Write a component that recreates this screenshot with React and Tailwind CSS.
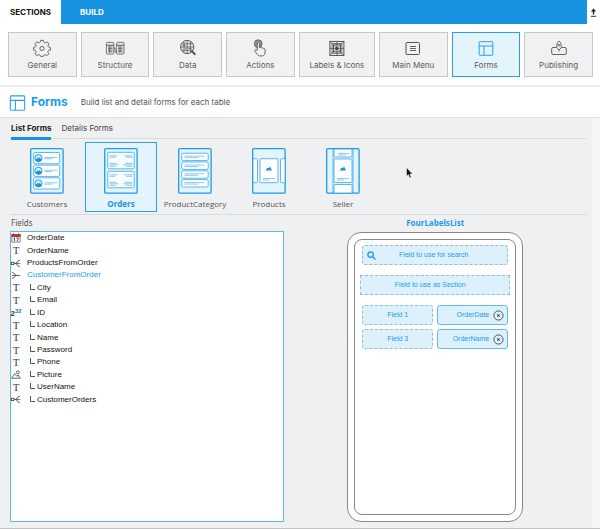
import React from 'react';

function GearIcon() {
  return (
    <svg width="18" height="18" viewBox="0 0 24 24" fill="none" stroke="currentColor" strokeWidth="1.2" strokeLinejoin="round">
      <path d="M10.300 1.800h3.400q.3 2.700 1.700 3.200t3.400-1.200l2.400 2.400q-1.700 2-1.200 3.400t3.200 1.700v3.400q-2.700.3-3.200 1.700t1.200 3.400l-2.400 2.400q-2-1.700-3.400-1.200t-1.700 2.200h-3.400q-.3-1.700-1.700-2.200t-3.400 1.200l-2.400-2.400q1.700-2 1.200-3.400t-3.200-1.700v-3.400q2.700-.3 3.200-1.700t-1.200-3.400l2.400-2.400q2 1.700 3.400 1.200t1.700-3.200z" />
      <circle cx="12" cy="12.600" r="2.800" />
    </svg>
  );
}

function StructureIcon() {
  return (
    <svg width="20" height="18" viewBox="0 0 20 18" fill="none" stroke="currentColor" strokeWidth="0.8">
      <rect x="1.400" y="3.400" width="7.400" height="11.600" rx="1" />
      <rect x="11.600" y="3.400" width="7.400" height="11.600" rx="1" />
      <path d="M1.400 6.200h7.400M11.600 6.200h7.400" strokeWidth="1" />
      <path d="M8.800 9h1.200v4h1.600M3 8h4.500M3 9.600h4.500M3 11.200h4.500M3 12.800h4.500M4.600 7.500v6M13 8h4.600M13 9.600h4.600M13 11.200h4.600M13 12.800h4.600M15 7.500v6" />
    </svg>
  );
}

function DataIcon() {
  return (
    <svg width="18" height="18" viewBox="0 0 18 18" fill="none" stroke="currentColor" strokeWidth="0.8">
      <circle cx="8.200" cy="8" r="6.600" strokeWidth="1" />
      <path d="M2.600 4.800h11.200M1.700 8h13M2.600 11.200h11.200M5 2.400v11.200M8.200 1.500v13M11.400 2.400v11.200M3.600 6.400h3M9.500 9.600h3M6 9.600h1.500" />
      <path d="M13 12.500l2.800 2.600" strokeWidth="2" strokeLinecap="round" />
    </svg>
  );
}

function TapIcon() {
  return (
    <svg width="18" height="18" viewBox="0 0 18 18" fill="none" stroke="currentColor" strokeWidth="0.9" strokeLinejoin="round">
      <circle cx="7.200" cy="4.700" r="3.900" fill="currentColor" fillOpacity="0.6" strokeWidth="0.8" />
      <path
        d="M6.300 11.300V4.800c0-1.400 2.200-1.400 2.200 0v3.900c.5-.7 1.700-.6 1.900.3.500-.6 1.700-.4 1.800.5.700-.4 1.900 0 1.900 1v2.500c0 2-1.100 3.900-2.500 3.900H8.500c-1 0-1.500-.5-2-1.300l-2.600-3.300c-.8-1.200.7-2.200 1.600-1.300z"
        fill="#f0f1f3"
      />
    </svg>
  );
}

function LabelsIcon() {
  return (
    <svg width="18" height="18" viewBox="0 0 18 18" fill="none" stroke="currentColor" strokeWidth="0.9">
      <rect x="1.900" y="2.400" width="14" height="14" />
      <rect x="5.400" y="5.900" width="7" height="7" />
      <path d="M1.900 2.400l14 14M15.900 2.400l-14 14M8.900 2.400v14M1.900 9.400h14M4 4.500h9.800v9.800H4z" strokeWidth="0.7" />
      <circle cx="8.900" cy="9.400" r="1.300" fill="currentColor" />
    </svg>
  );
}

function MenuIcon() {
  return (
    <svg width="18" height="18" viewBox="0 0 18 18" fill="none" stroke="currentColor">
      <rect x="2" y="3.500" width="13.500" height="12" rx="1" strokeWidth="1" />
      <path d="M6 7.500h6M6 9.500h6M6 11.500h6" strokeWidth="0.9" />
    </svg>
  );
}

function FormsIcon({ size }) {
  return (
    <svg width={size} height={size} viewBox="0 0 18 18" fill="none" stroke="currentColor" strokeWidth="1">
      <rect x="2.200" y="2.700" width="13.600" height="13.600" rx="0.800" />
      <path d="M2.200 7h13.600M7 7v9.300" />
    </svg>
  );
}

function PublishIcon() {
  return (
    <svg width="18" height="18" viewBox="0 0 18 18" fill="none" stroke="currentColor" strokeWidth="0.9" strokeLinejoin="round">
      <path d="M6.500 8.500H3a1.300 1.300 0 0 0-1.300 1.300v4.400A1.300 1.300 0 0 0 3 15.500h12a1.300 1.300 0 0 0 1.300-1.300V9.800A1.300 1.300 0 0 0 15 8.500h-3.500" />
      <path d="M9 2c-1.400 1-2.200 2.600-2.200 4.200v2.600L9 11l2.200-2.200V6.200C11.200 4.600 10.400 3 9 2zM9 11v1.500" />
      <circle cx="9" cy="6.200" r="0.800" />
    </svg>
  );
}

const tools = [
  { name: 'General', icon: <GearIcon /> },
  { name: 'Structure', icon: <StructureIcon /> },
  { name: 'Data', icon: <DataIcon /> },
  { name: 'Actions', icon: <TapIcon /> },
  { name: 'Labels & Icons', icon: <LabelsIcon />, dark: true },
  { name: 'Main Menu', icon: <MenuIcon /> },
  { name: 'Forms', icon: <FormsIcon size={18} />, active: true },
  { name: 'Publishing', icon: <PublishIcon /> },
];

function Thumb({ children }) {
  return (
    <svg width="34" height="46" viewBox="0 0 34 46" fill="none" stroke="#1f9be6" strokeWidth="0.7">
      <rect x="0.700" y="0.700" width="32.400" height="44.400" rx="1.200" fill="#e3f4fd" strokeWidth="1.300" />
      {children}
    </svg>
  );
}

function CustomersThumb() {
  return (
    <Thumb>
      {[4.5, 17.2, 29.8].map((y) => (
        <g key={y}>
          <rect x="3.700" y={y} width="26" height="11.200" rx="1.500" fill="#fff" />
          <circle cx="8.500" cy={y + 5.6} r="3.600" fill="#d5effd" strokeWidth="1" />
          <path d={`M5.700 ${y + 7.5}l2-2.500 1.200 1 1-1.200 1.600 2.700c-1.500 2-4.500 2-5.800 0z`} fill="#1f8fd6" stroke="none" />
          <path d={`M14.500 ${y + 6.3}h8M14.500 ${y + 5}h13`} stroke="#5bb4ea" />
        </g>
      ))}
    </Thumb>
  );
}

function OrdersThumb() {
  return (
    <Thumb>
      {[4.3, 23.3].map((y) => (
        <g key={y}>
          <rect x="3.700" y={y} width="26.500" height="16.500" rx="1.500" fill="#fafdff" />
          <path
            d={`M5.500 ${y + 3.5}h8M5.500 ${y + 5}h6M20 ${y + 3.5}h8.500M22 ${y + 5}h6.500M5.500 ${y + 11}h7M5.500 ${y + 12.5}h9M5.500 ${y + 14}h6M21 ${y + 11}h7.500M19 ${y + 12.5}h9.500M22 ${y + 14}h6.500`}
            stroke="#5bb4ea"
          />
        </g>
      ))}
    </Thumb>
  );
}

function CategoryThumb() {
  return (
    <Thumb>
      {[5.2, 14, 22.8, 31.6].map((y) => (
        <g key={y}>
          <rect x="3.700" y={y} width="26.500" height="7.400" rx="1.500" fill="#fff" />
          <path d={`M6.500 ${y + 3}h20M6.500 ${y + 4.5}h14`} stroke="#5bb4ea" />
        </g>
      ))}
    </Thumb>
  );
}

function ProductsThumb() {
  return (
    <Thumb>
      <rect x="8" y="10.700" width="18" height="24" rx="1" fill="#fff" />
      <path d="M1 10.700h3.500q1 0 1 1v22q0 1-1 1H1zM33 10.700h-3.500q-1 0-1 1v22q0 1 1 1H33z" fill="#fff" />
      <path d="M13.500 22.500l2.200-3 1 .8 1.400-1.800 1.800 4z" fill="#1f8fd6" stroke="none" />
      <path d="M11 30.500h12M11 32h7" stroke="#5bb4ea" />
    </Thumb>
  );
}

function SellerThumb() {
  return (
    <Thumb>
      <path d="M7 1v44M27 1v44" />
      <path d="M8 1v7q0 1 1 1h16q1 0 1-1V1zM8 45v-7.500q0-1 1-1h16q1 0 1 1V45z" fill="#fff" />
      <rect x="8" y="11" width="18" height="23.500" rx="1" fill="#fff" />
      <path d="M13.500 22.500l2.200-3 1 .8 1.400-1.800 1.800 4z" fill="#1f8fd6" stroke="none" />
      <path d="M11 30.500h12M11 32h7M12 5.500h11M12 7h8" stroke="#5bb4ea" />
    </Thumb>
  );
}

const forms = [
  { name: 'Customers', thumb: <CustomersThumb /> },
  { name: 'Orders', thumb: <OrdersThumb />, active: true },
  { name: 'ProductCategory', thumb: <CategoryThumb /> },
  { name: 'Products', thumb: <ProductsThumb /> },
  { name: 'Seller', thumb: <SellerThumb /> },
];

function CalendarIcon() {
  return (
    <svg width="10" height="10" viewBox="0 0 10 10">
      <rect x="0.900" y="1.500" width="8.200" height="7.500" fill="#fff" stroke="#666" strokeWidth="0.8" />
      <path d="M0.500 1.200h9v2.800h-9z" fill="#c8301f" />
      <path d="M2.500 0.300v2M7.500 0.300v2" stroke="#555" strokeWidth="0.900" />
      <path d="M2.500 5.300l1-.5v3.400M5.200 5h2.300l-1.300 3.200" fill="none" stroke="#444" strokeWidth="0.900" />
    </svg>
  );
}

function TextIcon() {
  return <span className="font-['Liberation_Serif',serif] text-[11px] leading-none text-[#444]">T</span>;
}

function NumberIcon() {
  return (
    <span className="flex items-start font-['Liberation_Sans',sans-serif] font-bold leading-none">
      <span className="pt-0.5 text-[8px] text-[#333]">2</span>
      <span className="text-[6px] text-[#1f77b8]">32</span>
    </span>
  );
}

function OneToManyIcon() {
  return (
    <svg width="11" height="9" viewBox="0 0 11 9" fill="none" stroke="#444" strokeWidth="0.9">
      <rect x="0.600" y="3.100" width="2.600" height="2.600" />
      <path d="M3.200 4.400h6.800M5 4.400C6.800 4.400 6.500 1.200 9 1.200h1M5 4.400C6.800 4.400 6.500 7.700 9 7.700h1" />
    </svg>
  );
}

function ManyToOneIcon() {
  return (
    <svg width="11" height="9" viewBox="0 0 11 9" fill="none" stroke="#444" strokeWidth="0.9">
      <path d="M1 4.400h9M1 1.200h.8c2.200 0 2 3.200 4.200 3.200M1 7.700h.8c2.200 0 2-3.300 4.200-3.300" />
    </svg>
  );
}

function PictureIcon() {
  return (
    <svg width="10" height="9" viewBox="0 0 10 9" fill="none" stroke="#555" strokeWidth="0.9" strokeLinejoin="round">
      <circle cx="6.800" cy="2.300" r="1.500" />
      <path d="M0.600 8.200h8.800L7.200 5 5.800 6.300 3.600 3.600z" />
    </svg>
  );
}

const fields = [
  { name: 'OrderDate', icon: <CalendarIcon /> },
  { name: 'OrderName', icon: <TextIcon /> },
  { name: 'ProductsFromOrder', icon: <OneToManyIcon /> },
  { name: 'CustomerFromOrder', icon: <ManyToOneIcon />, active: true },
  { name: 'City', icon: <TextIcon />, child: true },
  { name: 'Email', icon: <TextIcon />, child: true },
  { name: 'ID', icon: <NumberIcon />, child: true },
  { name: 'Location', icon: <TextIcon />, child: true },
  { name: 'Name', icon: <TextIcon />, child: true },
  { name: 'Password', icon: <TextIcon />, child: true },
  { name: 'Phone', icon: <TextIcon />, child: true },
  { name: 'Picture', icon: <PictureIcon />, child: true },
  { name: 'UserName', icon: <TextIcon />, child: true },
  { name: 'CustomerOrders', icon: <OneToManyIcon />, child: true },
];

function FieldRow({ field }) {
  return (
    <li className={`flex items-center ${field.active ? 'text-[#1f9bea]' : 'text-[#111]'}`}>
      <span className="flex w-[10px] shrink-0 items-center justify-center">{field.icon}</span>
      {field.child ? (
        <span className="flex items-center gap-0.5 pl-[9px]">
          <svg width="5" height="8" viewBox="0 0 5 8" fill="none" stroke="#555" strokeWidth="1">
            <path d="M0.500 0v5.500h4.500" />
          </svg>
          {field.name}
        </span>
      ) : (
        <span className="pl-1.5">{field.name}</span>
      )}
    </li>
  );
}

function DropSlot({ children }) {
  return (
    <div className="flex h-5 items-center justify-center rounded-[3px] border border-dashed border-[#8fbcd6] bg-[#ddf1fc]">
      {children}
    </div>
  );
}

function FilledSlot({ children }) {
  return (
    <div className="flex h-5 items-center justify-end gap-1 rounded-[3px] border border-[#63bcf0] bg-[#ddf1fc] pr-[3px]">
      {children}
      <button type="button" aria-label={`Remove ${children}`} className="text-[#555]">
        <svg width="11" height="11" viewBox="0 0 11 11" fill="none" stroke="currentColor" strokeWidth="1">
          <circle cx="5.500" cy="5.500" r="4.600" />
          <path d="M4.300 4.300l2.400 2.400M6.700 4.300L4.300 6.700" strokeWidth="1.100" />
        </svg>
      </button>
    </div>
  );
}

export default function App() {
  return (
    <div className="relative flex min-h-screen flex-col bg-white font-['Inter',sans-serif] text-[8px] leading-3 text-[#555]">
      <header className="flex h-6 items-stretch">
        <button type="button" className="w-[61px] text-[8px] font-bold text-[#111]">SECTIONS</button>
        <div className="flex flex-1 bg-[#1893e0] pl-[19px]">
          <button type="button" className="text-[8px] font-bold text-white">BUILD</button>
        </div>
        <button type="button" aria-label="Upload" className="flex w-[13px] items-center justify-center text-[#222]">
          <svg width="7" height="9" viewBox="0 0 7 9" fill="none" stroke="currentColor">
            <path d="M3.500 6.500V2" strokeWidth="1.400" />
            <path d="M0.800 3.500L3.500 0.500l2.700 3z" fill="currentColor" stroke="none" />
            <path d="M0.800 8.300h5.400" strokeWidth="0.900" />
          </svg>
        </button>
      </header>

      <nav className="grid grid-cols-[repeat(4,9fr)_10fr_repeat(3,9fr)] gap-1 border-b-2 border-[#ebebee] py-2 pl-2 pr-[7px]">
        {tools.map((tool) => (
          <button
            key={tool.name}
            type="button"
            className={`flex h-[45px] flex-col items-center justify-center gap-0.5 border ${
              tool.active ? 'border-[#2b9cec] bg-[#e3f4fd] text-[#2b9fe9]' : 'border-[#c6c7c8] bg-[#f0f1f3]'
            } ${tool.dark ? 'text-[#444]' : ''}`}
          >
            {tool.icon}
            <span className="text-[#5c5c5c]">{tool.name}</span>
          </button>
        ))}
      </nav>

      <div className="flex h-[31px] items-center border-b border-[#e0e0e3] pl-2">
        <span className="text-[#2b9fe9]"><FormsIcon size={19} /></span>
        <h1 className="pl-1 text-[12px] font-bold text-[#1a9bea]">Forms</h1>
        <p className="pl-[13px]">Build list and detail forms for each table</p>
      </div>

      <main className="flex flex-1 flex-col border-r-8 border-[#f6f6f7] bg-[#eff0f2] pl-[10px] pr-1.5">
        <div className="flex h-[21px] gap-2.5 border-b border-[#d9dadc] pl-px">
          <button type="button" className="-mb-0.5 border-b-3 border-[#1893e0] font-bold text-[#222]">List Forms</button>
          <button type="button" className="text-[#444]">Details Forms</button>
        </div>

        <div className="mt-[3px] flex gap-0.5 border-b border-[#d9dadc] pb-0.5 pl-px font-['Open_Sans',sans-serif]">
          {forms.map((form) => (
            <button
              key={form.name}
              type="button"
              className={`flex h-[70px] w-[72px] flex-col items-center justify-between border pt-[5px] pb-px ${
                form.active ? 'border-[#2b9fe0] bg-[#e3f4fd] font-bold text-[#1a93e0]' : 'border-transparent'
              }`}
            >
              {form.thumb}
              <span>{form.name}</span>
            </button>
          ))}
        </div>

        <div className="grid flex-1 grid-cols-[274fr_301fr] pt-0.5 pb-1.5">
          <section className="flex flex-col">
            <h2 className="h-[14px] pl-px font-['Noto_Sans',sans-serif]">Fields</h2>
            <div className="flex-1 border border-[#63b5e6] bg-white font-['Liberation_Sans',sans-serif]">
              <ul className="grid h-[174px] grid-rows-14">
                {fields.map((field) => <FieldRow key={field.name} field={field} />)}
              </ul>
            </div>
          </section>

          <section className="flex flex-col items-center">
            <h2 className="h-[15px] font-['Noto_Sans',sans-serif] font-bold text-[#1a9bea]">FourLabelsList</h2>
            <div className="flex w-44 flex-1 rounded-[14px] border border-[#888] bg-white p-1.5">
              <div className="flex flex-1 flex-col rounded-[8px] border border-[#888] px-[5px] py-[5px] font-['Liberation_Sans',sans-serif] text-[7px] text-[#1a9bea]">
                <label className="mx-0.5 flex h-5 items-center rounded-[3px] border border-dashed border-[#9db9c8] bg-[#ddf1fc] px-1">
                  <svg width="9" height="9" viewBox="0 0 8 8" fill="none" stroke="currentColor" strokeWidth="1.200" className="shrink-0">
                    <circle cx="3.200" cy="3.200" r="2.400" />
                    <path d="M5 5l2.500 2.500" />
                  </svg>
                  <input
                    type="text"
                    aria-label="Search field"
                    placeholder="Field to use for search"
                    className="w-full min-w-0 bg-transparent pr-3 text-center outline-none placeholder:text-[#1a9bea]"
                  />
                </label>
                <div className="mt-2.5 flex h-5 items-center justify-center border border-dashed border-[#9db9c8] bg-[#ddf1fc] pr-2.5">
                  Field to use as Section
                </div>
                <div className="mx-0.5 mt-2.5 grid grid-cols-2 gap-1">
                  <DropSlot>Field 1</DropSlot>
                  <FilledSlot>OrderDate</FilledSlot>
                  <DropSlot>Field 3</DropSlot>
                  <FilledSlot>OrderName</FilledSlot>
                </div>
              </div>
            </div>
          </section>
        </div>
      </main>
      <div className="h-0.5 border-t border-[#c4c4c8] bg-white" />

      <svg className="absolute top-[167px] left-[406px]" width="7" height="12" viewBox="0 0 7 12">
        <path d="M0.500 0.500v8.800l1.900-1.700 1.300 3.300 1.500-.6-1.300-3.200h2.600z" fill="#111" stroke="#fff" strokeWidth="0.500" />
      </svg>
    </div>
  );
}
